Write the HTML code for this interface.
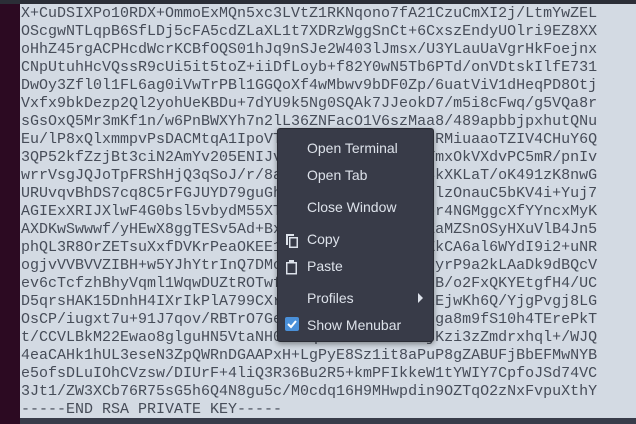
<!DOCTYPE html>
<html><head><meta charset="utf-8"><style>
body{margin:0;width:636px;height:424px;overflow:hidden;background:#2c0a22;position:relative;font-family:"Liberation Sans",sans-serif}
#top{position:absolute;left:0;top:0;width:636px;height:4px;background:#2b2e37}
#term{position:absolute;left:20px;top:4px;width:616px;height:414px;background:#d3dae3}
#txt{position:absolute;left:21px;top:5px;margin:0;font:15px/18px "Liberation Mono",monospace;color:#464c58;white-space:pre}
#bot{position:absolute;left:20px;top:418px;width:616px;height:6px;background:#383c4a}
#menu{position:absolute;left:277px;top:128px;width:157px;height:214px;background:#383b48;border:1px solid #2a2c35;border-radius:3px;box-shadow:0 2px 6px rgba(0,0,0,.4);box-sizing:border-box}
.it{position:absolute;left:29px;font-size:14px;color:#dde2ea;line-height:16px}
</style></head><body>
<div id="top"></div><div id="term"></div>
<pre id="txt">X+CuDSIXPo10RDX+OmmoExMQn5xc3LVtZ1RKNqono7fA21CzuCmXI2j/LtmYwZEL
OScgwNTLqpB6SfLDj5cFA5cdZLaXL1t7XDRzWggSnCt+6CxszEndyUOlri9EZ8XX
oHhZ45rgACPHcdWcrKCBfOQS01hJq9nSJe2W403lJmsx/U3YLauUaVgrHkFoejnx
CNpUtuhHcVQssR9cUi5it5toZ+iiDfLoyb+f82Y0wN5Tb6PTd/onVDtskIlfE731
DwOy3Zfl0l1FL6ag0iVwTrPBl1GGQoXf4wMbwv9bDF0Zp/6uatViV1dHeqPD8Otj
Vxfx9bkDezp2Ql2yohUeKBDu+7dYU9k5Ng0SQAk7JJeokD7/m5i8cFwq/g5VQa8r
sGsOxQ5Mr3mKf1n/w6PnBWXYh7n2lL36ZNFacO1V6szMaa8/489apbbjpxhutQNu
Eu/lP8xQlxmmpvPsDACMtqA1IpoVT4kx9PqLm2sWbE0aQzRMiuaaoTZIV4CHuY6Q
3QP52kfZzjBt3ciN2AmYv205ENIJv8sLq1Wz3ke0pTnRbYmxOkVXdvPC5mR/pnIv
wrrVsgJQJoTpFRShHjQ3qSoJ/r/8aQ2mTx7vNc1LbgRhW3kXKLaT/oK491zK8nwG
URUvqvBhDS7cq8C5rFGJUYD79guGh3WkPq0sLtE2vX9bKdlzOnauC5bKV4i+Yuj7
AGIExXRIJXlwF4G0bsl5vbydM55XT1qP8kR0aZmFw9cD2pr4NGMggcXfYYncxMyK
AXDKwSwwwf/yHEwX8ggTESv5Ad+Bx2LkQ7hN0pWcJvT8sEaMZSnOSyHXuVlB4Jn5
phQL3R8OrZETsuXxfDVKrPeaOKEE1nRt6Yq3Lm9dBsWx4ZkCA6al6WYdI9i2+uNR
ogjvVVBVVZIBH+w5YJhYtrInQ7DMc4PzK1vWq8SjEoLm7NyrP9a2kLAaDk9dBQcV
ev6cTcfzhBhyVqml1WqwDUZtROTwf3KdL0nQx7hMpGa9RzB/o2FxQKYEtgfH4/UC
D5qrsHAK15DnhH4IXrIkPlA799CXr2Tm8WqZ1vNcLbQ5tkEjwKh6Q/YjgPvgj8LG
OsCP/iugxt7u+91J7qov/RBTrO7Ge4HxV0sLp2KmQzN1udga8m9fS10h4TErePkT
t/CCVLBkM22Ewao8glguHN5VtaNH0c7RqY3sWvLd1xPh6jKzi3zZmdrxhql+/WJQ
4eaCAHk1hUL3eseN3ZpQWRnDGAAPxH+LgPyE8Sz1it8aPuP8gZABUFjBbEFMwNYB
e5ofsDLuIOhCVzsw/DIUrF+4liQ3R36Bu2R5+kmPFIkkeW1tYWIY7CpfoJSd74VC
3Jt1/ZW3XCb76R75sG5h6Q4N8gu5c/M0cdq16H9MHwpdin9OZTqO2zNxFvpuXthY
-----END RSA PRIVATE KEY-----</pre>
<div id="bot"></div>
<div id="menu">
<div class="it" style="top:11px">Open Terminal</div>
<div class="it" style="top:38px">Open Tab</div>
<div class="it" style="top:70px">Close Window</div>
<svg style="position:absolute;left:7px;top:104px" width="14" height="16" viewBox="0 0 14 16"><path d="M1 1h8v2H3v9H1z" fill="#dde2ea"/><rect x="4.75" y="4.75" width="7.5" height="9.5" fill="none" stroke="#dde2ea" stroke-width="1.5"/></svg>
<div class="it" style="top:102px">Copy</div>
<svg style="position:absolute;left:7px;top:130px" width="13" height="16" viewBox="0 0 13 16"><rect x="1.75" y="3.75" width="9.5" height="11" fill="none" stroke="#dde2ea" stroke-width="1.5"/><rect x="4" y="1" width="5" height="3.5" fill="#dde2ea"/></svg>
<div class="it" style="top:129px">Paste</div>
<div class="it" style="top:161px">Profiles</div>
<svg style="position:absolute;left:140px;top:164px" width="6" height="10"><path d="M0 0l5 5-5 5z" fill="#dde2ea"/></svg>
<svg style="position:absolute;left:7px;top:188px" width="14" height="14"><rect width="14" height="14" rx="2" fill="#4a90d9"/><path d="M3 7l3 3 5-6" fill="none" stroke="#fff" stroke-width="2"/></svg>
<div class="it" style="top:188px">Show Menubar</div>
</div>
</body></html>
